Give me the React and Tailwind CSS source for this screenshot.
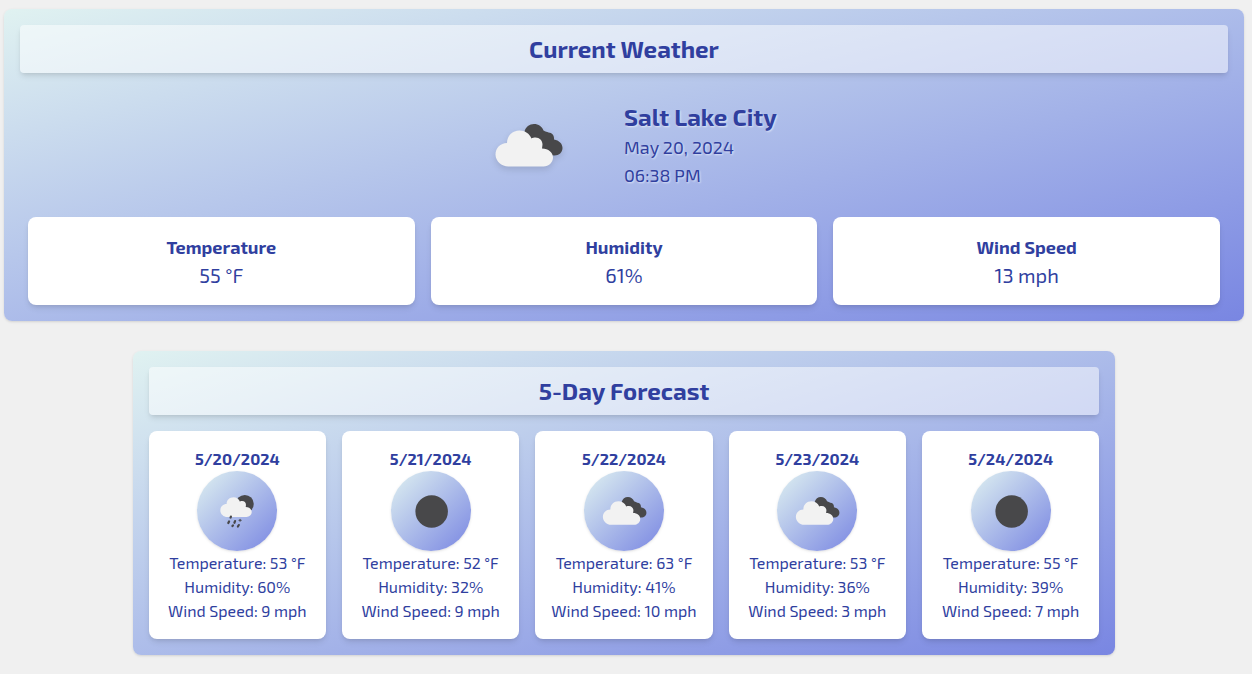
const stats = [
  { label: "Temperature", value: "55 °F" },
  { label: "Humidity", value: "61%" },
  { label: "Wind Speed", value: "13 mph" },
];

const days = [
  { date: "5/20/2024", icon: "shower", temp: 53, humidity: 60, wind: 9 },
  { date: "5/21/2024", icon: "clear", temp: 52, humidity: 32, wind: 9 },
  { date: "5/22/2024", icon: "clouds", temp: 63, humidity: 41, wind: 10 },
  { date: "5/23/2024", icon: "clouds", temp: 53, humidity: 36, wind: 3 },
  { date: "5/24/2024", icon: "clear", temp: 55, humidity: 39, wind: 7 },
];

const CLOUD =
  "M19 56C12 56 6 50.500 6 44C6 37.500 11 32.500 17.500 32.500C17.500 25 23 20 30 20C35.500 20 40 23 42 28C43 27 44.500 27 46 27C50 27 53 30 53 34L52.500 38C59 38 63.500 42 63.500 47C63.500 52 59 56 54 56Z";

function WeatherIcon({ kind, className }) {
  return (
    <svg viewBox="0 0 80 70" className={className} role="img" aria-label={kind}>
      {kind === "clear" && <circle cx="41" cy="36" r="25" fill="#48484a" />}
      {kind === "clouds" && (
        <g transform="translate(1.5 0.5)">
          <path
            d="M35 21C36 16.500 40 13.500 44.500 13.500C49 13.500 52.500 16 54 20C56 21 57.500 21.500 59 22C62.500 22 65 25 64.500 29C69.500 30 73 33 73 37.500C73 42 69.500 45 65 45C60 45 56 43 53 39L42 30Z"
            fill="#48484a"
          />
          <path d={CLOUD} fill="#f2f2f2" />
        </g>
      )}
      {kind === "shower" && (
        <>
          <circle cx="52" cy="24.500" r="13.800" fill="#48484a" />
          <g transform="translate(9.300 -2.500) scale(0.840)">
            <path d={CLOUD} fill="#f2f2f2" />
          </g>
          <g stroke="#48484a" strokeWidth="3.4" strokeLinecap="round">
            <path d="M30.600 44l-.5 1.500M27.800 51.500l-1.200 2.500M37 51l-1 2.500M33.800 57.500l-.8 1M42.800 57l-1.400 2.300" />
            <path d="M43 49.500h3.500M44.700 48v3" strokeWidth="1.600" />
          </g>
        </>
      )}
    </svg>
  );
}

function Panel({ title, className, children }) {
  return (
    <section
      className={`rounded-lg bg-[linear-gradient(to_bottom_right,#e0f2f1,#7986e2)] p-4 shadow ${className}`}
    >
      <h2 className="rounded bg-white/50 p-2 text-center text-2xl font-bold shadow-md">
        {title}
      </h2>
      {children}
    </section>
  );
}

export default function App() {
  return (
    <main className="flex min-h-screen flex-col items-center gap-[30px] bg-[#f0f0f0] py-[9px] pr-2 pl-1 font-['Exo_2','Open_Sans',sans-serif] text-[#303f9f]">
      <Panel title="Current Weather" className="w-full">
        <div className="flex items-center justify-center pt-7 pb-6">
          <div className="flex w-48 justify-center">
            <WeatherIcon kind="clouds" className="h-[70px] w-20 drop-shadow-md" />
          </div>
          <div className="w-48 text-lg leading-7 text-shadow-[1px_1px_2px_rgba(255,255,255,0.6)]">
            <h3 className="text-2xl font-bold leading-8">Salt Lake City</h3>
            <p>May 20, 2024</p>
            <p>06:38 PM</p>
          </div>
        </div>
        <div className="grid grid-cols-3 gap-4 px-2 pt-1">
          {stats.map((s) => (
            <div key={s.label} className="rounded-lg bg-white p-4 text-center shadow-md">
              <h4 className="text-lg leading-7 font-bold">{s.label}</h4>
              <p className="text-xl leading-7">{s.value}</p>
            </div>
          ))}
        </div>
      </Panel>

      <Panel title="5-Day Forecast" className="">
        <div className="mt-4 grid grid-cols-5 gap-4">
          {days.map((d) => (
            <article key={d.date} className="rounded-lg bg-white p-4 text-center shadow-md">
              <h3 className="font-bold">{d.date}</h3>
              <div className="mx-auto flex size-20 items-center justify-center rounded-full bg-[linear-gradient(to_bottom_right,#e0f2f1,#7986e2)] shadow">
                <WeatherIcon kind={d.icon} className="w-[52px]" />
              </div>
              <p>Temperature: {d.temp} °F</p>
              <p>Humidity: {d.humidity}%</p>
              <p>Wind Speed: {d.wind} mph</p>
            </article>
          ))}
        </div>
      </Panel>
    </main>
  );
}
